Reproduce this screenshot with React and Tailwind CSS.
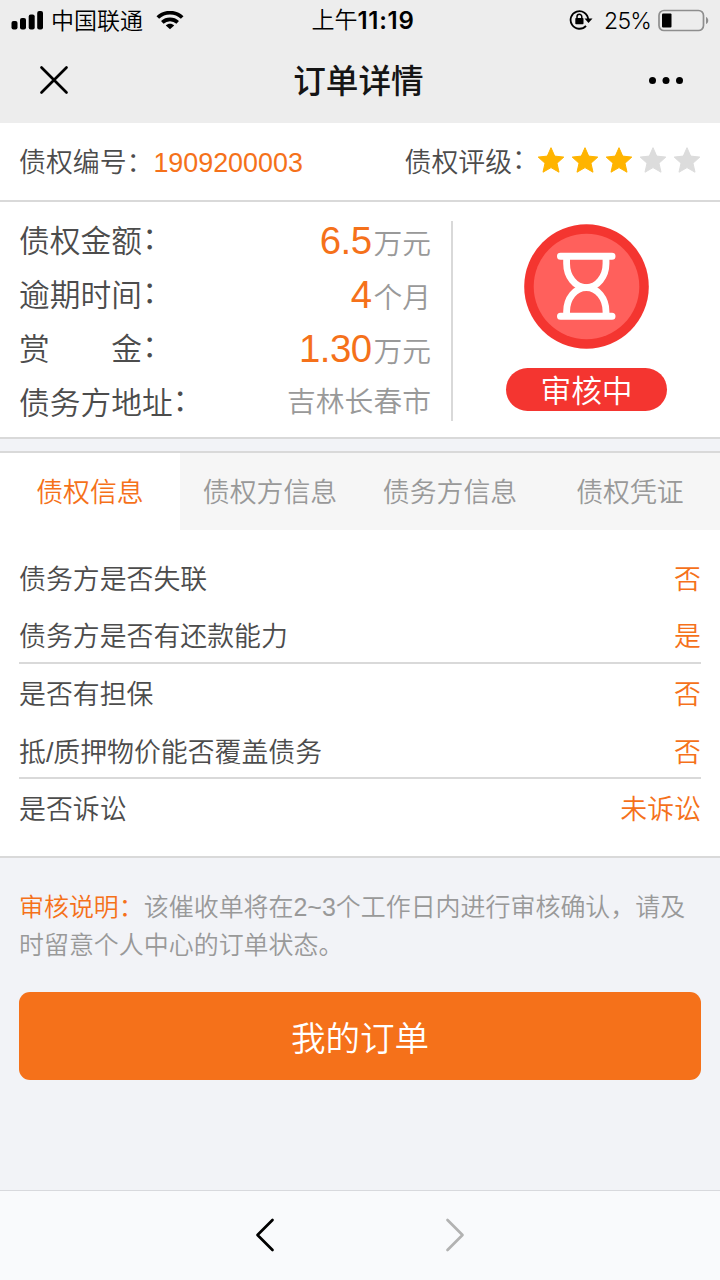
function StatusBar() {
  return (
    <div className="grid h-10 grid-cols-3 items-center text-[23px] leading-10 text-black font-['Inter','Noto_Sans_CJK_SC',sans-serif]">
      <div className="flex items-center pl-[11px]">
        <svg className="h-5 w-8" viewBox="0 0 32 20">
          <rect x="0.5" y="10" width="6" height="8.5" rx="2" />
          <rect x="9" y="7" width="6" height="11.5" rx="2" />
          <rect x="17.7" y="3.5" width="6" height="15" rx="2" />
          <rect x="26.2" y="0" width="5.8" height="18.5" rx="2" />
        </svg>
        <span className="ml-[8px] font-[350]">中国联通</span>
        <svg className="ml-[13px] h-5 w-7" viewBox="0 0 28 20" fill="none" stroke="#000" strokeWidth="3.8">
          <path d="M1.8 6.500C8.500 0.100 19.500 0.100 26.200 6.500" />
          <path d="M6.300 11.300C10.700 7.300 17.300 7.300 21.700 11.300" />
          <path d="M14 18.300l-4.200-3.800c2.200-2.300 6.200-2.300 8.400 0z" fill="#000" stroke="none" />
        </svg>
      </div>
      <div className="flex justify-center pl-[6px]">
        <span className="font-[350]">上午</span>
        <span className="pt-px text-[24px] font-semibold tracking-[0.7px]">11:19</span>
      </div>
      <div className="flex items-center justify-end pr-[10px]">
        <svg className="h-6 w-6" viewBox="0 0 24 24" fill="none" stroke="#000" strokeWidth="1.8">
          <path d="M19.2 10.500A8.800 8.800 0 1 0 17 16.800" />
          <path d="M15.500 9.500h8l-4 4.500z" fill="#000" stroke="none" />
          <rect x="6.300" y="9" width="8.200" height="6.300" rx="0.800" fill="#000" stroke="none" />
          <path d="M8 9.500V7.700a2.400 2.400 0 0 1 4.800 0V9.500" strokeWidth="1.500" />
        </svg>
        <span className="ml-[11px] tracking-[-0.8px]">25%</span>
        <svg className="ml-[7px] h-6 w-[52px]" viewBox="0 0 52 24">
          <rect x="1" y="1.5" width="44.500" height="20" rx="5" fill="none" stroke="#8e8e8e" strokeWidth="1.700" />
          <rect x="4" y="4.5" width="9.500" height="14" rx="1" />
          <path d="M48 8c3 1 3 6 0 7z" fill="#8e8e8e" />
        </svg>
      </div>
    </div>
  );
}

function TitleBar() {
  return (
    <div className="flex h-20 items-center justify-between pr-[36px] pl-[39px]">
      <svg className="h-[30px] w-[30px]" viewBox="0 0 30 30" stroke="#000" strokeWidth="2.700" strokeLinecap="round">
        <path d="M2.500 2.500l25 25M27.500 2.500l-25 25" />
      </svg>
      <h1 className="pt-[5px] text-[32.64px] font-medium text-[#151515]">订单详情</h1>
      <svg className="h-2 w-9" viewBox="0 0 36 8">
        <circle cx="4.500" cy="4.500" r="3.500" />
        <circle cx="18" cy="4.500" r="3.500" />
        <circle cx="31.500" cy="4.500" r="3.500" />
      </svg>
    </div>
  );
}

function Star({ on }) {
  return (
    <svg className="h-[34px] w-[34px]" viewBox="0 0 34 34">
      <path
        d="M17 4.700l3.700 8.400 9.100 1-6.800 6.100 2 9-8-4.600-8 4.600 2-9-6.800-6.100 9.100-1z"
        fill={on ? "#ffb400" : "#dcdcdc"}
        stroke={on ? "#ffb400" : "#dcdcdc"}
        strokeWidth="1"
        strokeLinejoin="round"
      />
    </svg>
  );
}

function Colon() {
  return <span className="inline-block -translate-y-[3px]">：</span>;
}

function Amount({ label, value, unit }) {
  return (
    <div className="flex h-[53.76px] items-center justify-between">
      <span className="pt-[4px] text-[30.72px] whitespace-pre">{label}<Colon /></span>
      <span className={`flex items-baseline text-[28.8px] leading-[53px] text-[#999] ${value ? "pt-[5px]" : "pt-[2px]"}`}>
        {value && <span className="mr-[2px] text-[38.4px] tracking-[-0.6px] text-[#f5711a]">{value}</span>}
        {unit}
      </span>
    </div>
  );
}

function Hourglass() {
  return (
    <svg className="h-[126px] w-[126px]" viewBox="0 0 126 126">
      <circle cx="62.500" cy="62.500" r="62.300" fill="#f43530" />
      <circle cx="62.500" cy="62.500" r="52.800" fill="#ff605c" />
      <g fill="none" stroke="#fff" strokeWidth="7" strokeLinecap="round">
        <path d="M36.500 32.300h51.500M36.500 92.300h51.500" />
        <path d="M42.600 33.500v6c0 13 8.500 24.200 19.700 24.200s19.700-11.200 19.700-24.200v-6" strokeWidth="6.800" />
        <path d="M42.600 91.500v-4c0-13 8.500-23.800 19.700-23.800s19.700 10.800 19.700 23.800v4" strokeWidth="6.800" />
      </g>
    </svg>
  );
}

const tabs = ["债权信息", "债权方信息", "债务方信息", "债权凭证"];

const groups = [
  [["债务方是否失联", "否"], ["债务方是否有还款能力", "是"]],
  [["是否有担保", "否"], ["抵/质押物价能否覆盖债务", "否"]],
  [["是否诉讼", "未诉讼"]],
];

export default function App() {
  return (
    <div className="flex h-[1280px] w-[720px] flex-col bg-[#f2f3f7] font-[350] text-[#4c4c4c] font-['Liberation_Sans','Noto_Sans_CJK_SC',sans-serif]">
      <header className="h-[123px] bg-[#ededed]">
        <StatusBar />
        <TitleBar />
      </header>

      <section className="flex h-[79px] items-center justify-between border-b-2 border-[#d9d9d9] bg-white pr-4 pl-[19px] text-[26.88px]">
        <div className="flex pt-[3px]">
          <span>债权编号：</span>
          <span className="text-[#f5711a]">1909200003</span>
        </div>
        <div className="flex items-center">
          <span className="-mr-[5px] pt-[3px]">债权评级<Colon /></span>
          <span className="flex pb-[3px]">
            {[1, 2, 3, 4, 5].map((n) => <Star key={n} on={n <= 3} />)}
          </span>
        </div>
      </section>

      <section className="flex h-[237px] border-b-2 border-[#d9d9d9] bg-white pt-[19px] pb-4">
        <div className="flex w-[453px] flex-col justify-center border-r-2 border-[#d9d9d9] pr-5 pl-[19px]">
          <Amount label="债权金额" value="6.5" unit="万元" />
          <Amount label="逾期时间" value="4" unit="个月" />
          <Amount label="赏　　金" value="1.30" unit="万元" />
          <Amount label="债务方地址" unit="吉林长春市" />
        </div>
        <div className="flex flex-1 flex-col items-center pt-[3px]">
          <Hourglass />
          <div className="mt-[18px] flex h-[43px] w-[161px] items-center justify-center rounded-full bg-[#f43530] pt-[5px] text-[30.72px] text-white">审核中</div>
        </div>
      </section>

      <section className="mt-3 h-[407px] border-y-2 border-[#d9d9d9] bg-white">
        <nav className="grid h-[77px] grid-cols-4 text-[26.88px]">
          {tabs.map((t, i) => (
            <div key={t} className={`flex items-center justify-center pt-1 ${i === 0 ? "text-[#f5711a]" : "bg-[#f6f6f6] text-[#999]"}`}>{t}</div>
          ))}
        </nav>
        <div className="px-[19px] pt-[18.6px] text-[26.88px]">
          {groups.map((rows, g) => (
            <div key={g} className={g < 2 ? "h-[115.2px] border-b-2 border-[#d9d9d9]" : ""}>
              {rows.map(([k, v]) => (
                <div key={k} className="flex h-[57.6px] items-center justify-between pt-[5px]">
                  <span>{k}</span>
                  <span className="text-[#f5711a]">{v}</span>
                </div>
              ))}
            </div>
          ))}
        </div>
      </section>

      <section className="flex-1 px-[19px] pt-[30px]">
        <p className="text-[24.96px] leading-[38.4px] text-[#999]">
          <span className="text-[#f5711a]">审核说明：</span>该催收单将在2~3个工作日内进行审核确认，请及时留意个人中心的订单状态。
        </p>
        <button className="mt-[27px] flex h-[88px] w-full items-center justify-center rounded-[11px] bg-[#f5711a] pt-[8px] text-[34.56px] text-white">我的订单</button>
      </section>

      <footer className="flex h-[90px] items-center justify-center gap-[170px] border-t border-[#d8d9dd] bg-[#f9fafc] pb-px">
        <svg className="h-[34px] w-5" viewBox="0 0 20 34" fill="none" stroke="#000" strokeWidth="2.700" strokeLinecap="round" strokeLinejoin="round">
          <path d="M17.500 2L2.500 17l15 15" />
        </svg>
        <svg className="h-[34px] w-5" viewBox="0 0 20 34" fill="none" stroke="#b2b2b2" strokeWidth="2.700" strokeLinecap="round" strokeLinejoin="round">
          <path d="M2.500 2l15 15-15 15" />
        </svg>
      </footer>
    </div>
  );
}
